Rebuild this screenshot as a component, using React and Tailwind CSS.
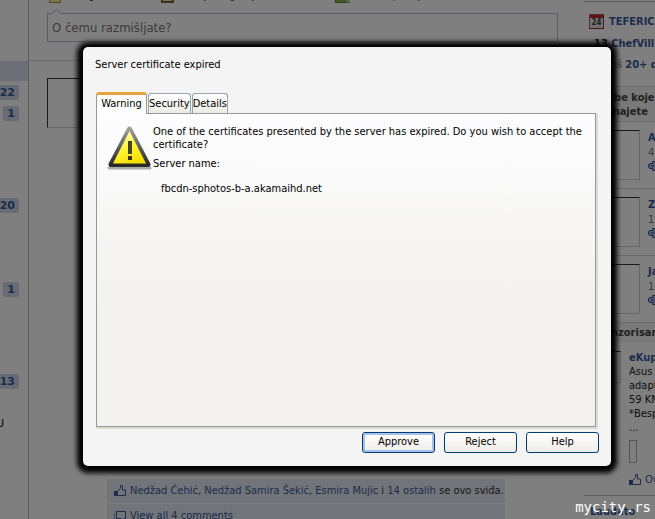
const sidebarCounts = [
  { id: 'news', count: 22, gap: 'mt-px' },
  { id: 'messages', count: 1, gap: 'mt-0' },
  { id: 'groups', count: 20, gap: 'mt-[71px]' },
  { id: 'apps', count: 1, gap: 'mt-[63px]' },
  { id: 'pages', count: 13, gap: 'mt-[71px]' },
]

const people = [
  { name: 'Adnan', mutual: '4 zajednička' },
  { name: 'Zlatan', mutual: '15 zajedničkih' },
  { name: 'Jasmin', mutual: '15 zajedničkih' },
]

const tabs = ['Warning', 'Security', 'Details']

const ThumbIcon = () => (
  <svg className="w-3 h-3 shrink-0" viewBox="0 0 12 12" fill="none" stroke="#3b5998">
    <rect x="0.5" y="6.5" width="3" height="4" fill="#3b5998" />
    <path d="M3.500 6.500L6.500 3.500V0.500h2v4.500h3v5.500h-7l-1-1" />
  </svg>
)

const CommentIcon = () => (
  <svg className="w-3 h-3 shrink-0" viewBox="0 0 12 12" fill="none" stroke="#3b5998">
    <path d="M2.500 1.500h9v7h-1.500v3l-3-3H2.500z" />
    <path d="M0.500 3v7.500h4.500l1.500 1" stroke="#8496bd" />
  </svg>
)

const AddFriendIcon = () => (
  <svg className="w-3 h-3 shrink-0" viewBox="0 0 12 12" fill="#9fb0d8" stroke="#3b5998">
    <path d="M4.500 1.500h3v2h4v5h-4v2h-3v-2h-3l-1-1v-3l1-1h3z" />
    <path d="M3 6h3M8 4v4" />
  </svg>
)

const CalendarIcon = () => (
  <svg className="w-4 h-4 shrink-0" viewBox="0 0 16 16">
    <rect x="0.500" y="0.500" width="14" height="14" fill="#e4e4e4" stroke="#a35a5a" />
    <rect x="1" y="1" width="13" height="3" fill="#c4262c" />
    <path d="M0 14.500h15M14.500 1v13" stroke="#8a3030" />
    <text x="7.500" y="11" textAnchor="middle" fontSize="8" fontWeight="bold" fill="#444">24</text>
  </svg>
)

const WarningIcon = () => (
  <svg className="w-12 h-12 shrink-0" viewBox="0 0 48 48">
    <defs>
      <linearGradient id="edge" x1="0" y1="0" x2="0" y2="1">
        <stop offset="0" stopColor="#a0a09a" />
        <stop offset="0.5" stopColor="#5f5f5c" />
        <stop offset="1" stopColor="#2a2a2a" />
      </linearGradient>
      <linearGradient id="face" x1="0.2" y1="0" x2="0.7" y2="1">
        <stop offset="0" stopColor="#fffde0" />
        <stop offset="0.5" stopColor="#fff536" />
        <stop offset="1" stopColor="#f5dc00" />
      </linearGradient>
    </defs>
    <path d="M4 45h41" stroke="#aaa" strokeWidth="3" strokeLinecap="round" />
    <path d="M24.500 6L43 41.500H6z" fill="url(#edge)" stroke="url(#edge)" strokeWidth="5" strokeLinejoin="round" />
    <path d="M24.500 8L41 40.500H8z" fill="url(#face)" />
    <rect x="23" y="18" width="4" height="13" fill="#45431c" />
    <rect x="23" y="33" width="4" height="4" fill="#33310f" />
  </svg>
)

const Sidebar = () => (
  <aside className="w-[29px] shrink-0 border-r border-[#b8b8b8] pt-[61px]">
    <div className="h-5 bg-[#d8dfea]" />
    {sidebarCounts.map(item => (
      <div key={item.id} className={`h-[21px] flex items-center justify-end pr-[9px] ${item.gap}`}>
        <span className="h-[15px] px-1 rounded-xs bg-[#cfd7e8] text-[#3b5998] font-bold text-[11px] leading-[15px] font-['DejaVu_Sans']">
          {item.count}
        </span>
      </div>
    ))}
    <div className="mt-6 h-4 flex justify-end pr-6 text-black leading-4">OGLASU</div>
  </aside>
)

const Feed = () => (
  <main className="flex-1 min-w-0">
    {/* Composer */}
    <div className="h-[13px] flex overflow-hidden pl-5">
      <div className="-mt-3 h-4 flex leading-4 text-[#3b5998]">
        <span className="w-28 flex gap-1 font-bold text-[#333]"><i className="w-3 h-[15px] bg-[#f5e9a0] border border-[#a89040]" /><a href="#status">Stanje</a></span>
        <span className="w-[174px] flex gap-1"><i className="w-[13px] h-[15px] bg-[#e8d8b8] border-2 border-[#806040]" /><a href="#photo">Dodaj fotografije/video</a></span>
        <span className="flex gap-1"><i className="w-[15px] h-[15px] bg-[#7ab648] border border-[#58823a] border-r-4 border-r-[#b8d0a0]" /><a href="#question">Postavi pitanje</a></span>
      </div>
    </div>
    <div className="relative ml-[18px] mr-[26px]">
      <svg className="absolute left-1 -top-1 w-3 h-[5px]" viewBox="0 0 12 5">
        <path d="M0.500 5L5.500 0.500L10.500 5" fill="#fff" stroke="#b4bbcd" />
      </svg>
      <input
        aria-label="Status"
        placeholder="O čemu razmišljate?"
        className="block w-full h-[29px] px-1 border border-[#b4bbcd] bg-transparent text-[13px] placeholder:text-[#777]"
      />
    </div>
    <hr className="mt-[18px] mr-[26px] border-[#d5d5d5]" />

    <div className="mt-[17px] ml-[18px] w-[50px] h-[50px] border border-[#ccc] border-t-[#333] border-l-[#333]" />

    {/* Likes and comments */}
    <div className="mt-[351px] ml-[78px] mr-[79px] text-[#3b5998]">
      <div className="h-6 flex items-center gap-1 pl-[7px] bg-[#e3e8f3] whitespace-nowrap">
        <ThumbIcon />
        <p className="text-[#333]">
          <a href="#n" className="text-[#3b5998]">Nedžad Ćehić</a>, <a href="#s" className="text-[#3b5998]">Nedžad Samira Šekić</a>, <a href="#e" className="text-[#3b5998]">Esmira Mujic</a> i <a href="#all" className="text-[#3b5998]">14 ostalih</a> se ovo sviđa.
        </p>
      </div>
      <div className="mt-px h-6 flex items-center gap-1 pl-[7px] bg-[#e3e8f3]">
        <CommentIcon />
        <a href="#comments">View all 4 comments</a>
      </div>
    </div>
  </main>
)

const RightColumn = () => (
  <aside className="w-[71px] shrink-0 overflow-hidden whitespace-nowrap pt-px text-[#3b5998]">
    <hr className="border-[#bbb]" />
    <div className="mt-3 h-4 flex items-center gap-1 pl-[5px] font-bold">
      <CalendarIcon />
      <a href="#event">TEFERIC</a>
    </div>
    <div className="mt-[6px] h-4 pl-[10px] leading-4 font-bold"><span className="text-[#222]">13</span> <a href="#games">ChefVille</a></div>
    <div className="mt-[5px] h-4 pl-6 leading-4 text-[#777]">Još <a href="#more" className="font-bold text-[#3b5998]">20+ drugih</a></div>

    <h2 className="mt-[13px] h-[35px] pl-[9px] pt-1 border-t border-[#d5d5d5] bg-[#f2f2f2] text-[#444] font-bold leading-[14px]">
      Osobe koje<br />poznajete
    </h2>
    {people.map(person => (
      <div key={person.name} className="h-[67px] flex gap-2 pt-2 pl-[6px] border-t border-[#d5d5d5]">
        <div className="w-[50px] h-[50px] shrink-0 border border-[#ccc] border-t-[#333]" />
        <div className="leading-[15px]">
          <a href="#person" className="block font-bold">{person.name}</a>
          <p className="text-[#777]">{person.mutual}</p>
          <AddFriendIcon />
        </div>
      </div>
    ))}

    <h2 className="h-5 pl-[6px] border-t border-[#d5d5d5] bg-[#f2f2f2] text-[#444] font-bold leading-5">Sponzorisano</h2>
    <div className="flex gap-2 mt-[9px] pl-[5px]">
      <div className="w-8 h-8 shrink-0 border border-[#ccc] border-t-[#333]" />
      <div className="leading-[14px] text-[#222]">
        <a href="#ad" className="block font-bold text-[#3b5998]">eKupi</a>
        <p>Asus<br />adapter<br />59 KM<br />*Besplatna<br />...</p>
        <div className="mt-[5px] w-2 h-[23px] border border-[#aaa]" />
        <div className="mt-[10px] flex items-center gap-1 text-[#3b5998]"><ThumbIcon />Ova</div>
      </div>
    </div>
    <hr className="mt-2 border-[#bbb]" />
    <a href="#laudato" className="block mt-2 pl-[6px] font-bold leading-4">Laudato</a>
  </aside>
)

const CertificateDialog = () => (
  <section
    role="dialog"
    aria-labelledby="dialog-title"
    className="flex-1 flex flex-col min-w-0 rounded-[5px] bg-[#f4f4f4] px-3 pt-[10px] pb-[13px] shadow-[0_1px_5px_6px_#000]"
  >
    <h1 id="dialog-title" className="leading-4">Server certificate expired</h1>

    <div role="tablist" className="mt-[19px] ml-px flex items-end gap-px">
      {tabs.map((tab, i) => (
        <button
          key={tab}
          role="tab"
          aria-selected={i === 0}
          className={i === 0
            ? 'relative h-[22px] w-[51px] -mb-px rounded-t-[3px] border-x border-t-3 border-x-[#919b9c] border-t-[#e8a33d] bg-[#fdfdfd] pb-px'
            : 'h-5 pt-px rounded-t-[3px] border border-b-0 border-[#91a7a8] bg-linear-to-b from-white to-[#ecebe5]'}
        >
          {tab}
        </button>
      ))}
    </div>

    <div role="tabpanel" className="flex-1 ml-px mr-[3px] flex items-start pt-[9px] pl-2 pr-2 border border-[#919b9c] bg-linear-to-b from-[#fdfdff] to-[#f3f2ee] to-60% shadow-[1px_1px_0_1px_#dddcd0]">
      <WarningIcon />
      <div className="leading-[13px] pt-[2px]">
        <p>One of the certificates presented by the server has expired. Do you wish to accept the certificate?</p>
        <p className="mt-[6px]">Server name:</p>
        <p className="mt-3 pl-2">fbcdn-sphotos-b-a.akamaihd.net</p>
      </div>
    </div>

    <div className="mt-[5px] flex justify-end gap-[9px]">
      <button className="w-[73px] h-[21px] rounded-[3px] border border-[#003c74] bg-linear-to-b from-white to-[#edece6] shadow-[inset_0_0_0_2px_#a9c0ee]">Approve</button>
      <button className="w-[73px] h-[21px] rounded-[3px] border border-[#003c74] bg-linear-to-b from-white to-[#edece6]">Reject</button>
      <button className="w-[73px] h-[21px] rounded-[3px] border border-[#003c74] bg-linear-to-b from-white to-[#edece6]">Help</button>
    </div>
  </section>
)

const App = () => {
  return (
    <div className="relative h-screen overflow-hidden bg-white text-black text-[11px] font-['DejaVu_Sans_Condensed','DejaVu_Sans',sans-serif]">
      <div className="flex">
        <Sidebar />
        <Feed />
        <RightColumn />
      </div>

      {/* Modal over the dimmed page */}
      <div className="absolute inset-0 flex bg-black/50 pl-[83px] pr-11 pt-[47px] pb-[53px]">
        <CertificateDialog />
      </div>

      <span className="absolute right-1 bottom-1 text-white text-[14px] leading-4 font-['DejaVu_Sans_Mono',monospace]">mycity.rs</span>
    </div>
  )
}

export default App
